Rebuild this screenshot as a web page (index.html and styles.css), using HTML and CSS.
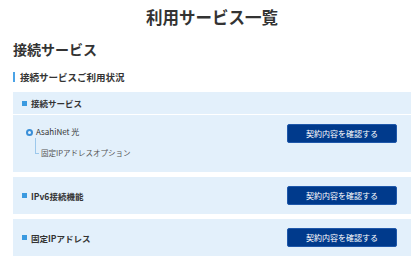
FILE: index.html
```html
<!DOCTYPE html>
<html lang="ja">
<head>
    <meta charset="UTF-8">
    <meta name="viewport" content="width=device-width, initial-scale=1.0">
    <title>利用サービス一覧</title>
    <link rel="stylesheet" href="styles.css">
</head>
<body>
    <div class="container">
        <h1>利用サービス一覧</h1>
        <h2>接続サービス</h2>
        <h3>接続サービスご利用状況</h3>

        <div class="panel">
            <div class="panel-header">
                <span class="marker"></span>
                <span class="panel-title">接続サービス</span>
            </div>
            <div class="panel-body">
                <div class="service-list">
                    <div class="service-item">
                        <span class="circle"></span>
                        <span>AsahiNet 光</span>
                    </div>
                    <div class="sub-item">固定IPアドレスオプション</div>
                </div>
                <button class="btn">契約内容を確認する</button>
            </div>
        </div>

        <div class="panel panel-row">
            <div class="panel-label">
                <span class="marker"></span>
                <span class="panel-title">IPv6接続機能</span>
            </div>
            <button class="btn">契約内容を確認する</button>
        </div>

        <div class="panel panel-row">
            <div class="panel-label">
                <span class="marker"></span>
                <span class="panel-title">固定IPアドレス</span>
            </div>
            <button class="btn">契約内容を確認する</button>
        </div>
    </div>
</body>
</html>
```

FILE: styles.css
```css
* {
    margin: 0;
    padding: 0;
    box-sizing: border-box;
    font-family: "Noto Sans CJK JP", "Noto Sans", sans-serif;
}

body {
    background-color: white;
    color: #333;
}

.container {
    padding: 0 9px 0 13px;
}

h1 {
    padding-top: 5px;
    font-size: 16.5px;
    line-height: 24px;
    font-weight: 700;
    text-align: center;
}

h2 {
    margin-top: 10px;
    font-size: 14px;
    line-height: 20px;
    font-weight: 700;
}

h3 {
    margin-top: 13px;
    padding-left: 5px;
    border-left: 2px solid #4ba3e6;
    font-size: 9.5px;
    line-height: 10px;
    font-weight: 700;
}

.panel {
    background-color: #e3f0fb;
    margin-top: 5px;
}

.container h3 + .panel {
    margin-top: 10px;
}

.panel-header {
    display: flex;
    align-items: center;
    height: 23px;
    padding-left: 9px;
    border-bottom: 1px solid white;
}

.marker {
    display: inline-block;
    width: 5px;
    height: 5px;
    background-color: #3a9ae0;
    margin-right: 4px;
}

.panel-title {
    font-size: 8.5px;
    font-weight: 700;
}

.panel-label {
    display: flex;
    align-items: center;
}

.panel-body {
    display: flex;
    justify-content: space-between;
    align-items: flex-start;
    padding: 9px 14px 13px 13px;
}

.service-item {
    display: flex;
    align-items: center;
    margin-top: 2px;
    font-size: 8px;
    line-height: 12px;
}

.circle {
    width: 7px;
    height: 7px;
    border: 2px solid #3a8fd8;
    border-radius: 50%;
    margin-right: 3px;
}

.sub-item {
    position: relative;
    margin-top: 9px;
    margin-left: 15px;
    font-size: 7.5px;
    line-height: 12px;
    color: #555;
}

.sub-item::before {
    content: "";
    position: absolute;
    left: -6px;
    top: -9px;
    width: 3px;
    height: 15px;
    border-left: 1px solid #9cc8ec;
    border-bottom: 1px solid #9cc8ec;
}

.panel-row {
    display: flex;
    justify-content: space-between;
    align-items: center;
    padding: 9px 14px 9px 9px;
}

.btn {
    width: 110px;
    height: 19px;
    background-color: #003a8c;
    border: 1px solid #1f58aa;
    border-radius: 2px;
    color: white;
    font-size: 8px;
    cursor: pointer;
}
```
